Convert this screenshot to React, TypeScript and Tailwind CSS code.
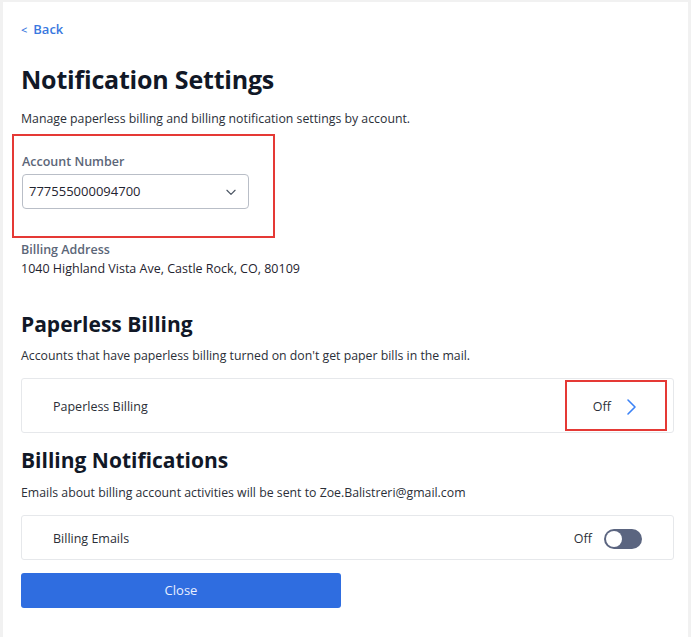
import React from "react";

const font = { fontFamily: '"Open Sans", "Noto Sans", sans-serif' };

const ChevronDown = () => (
	<svg width="14" height="14" viewBox="0 0 24 24" fill="none" stroke="#4b5563" strokeWidth="2" strokeLinecap="round" strokeLinejoin="round">
		<path d="M5 9l7 7 7-7" />
	</svg>
);

const ChevronRight = () => (
	<svg width="12" height="20" viewBox="0 0 12 20" fill="none" stroke="#3b82f6" strokeWidth="1.6" strokeLinecap="round" strokeLinejoin="round">
		<path d="M3 3l7 7-7 7" />
	</svg>
);

const App = () => {
	return (
		<div className="w-[691px] h-[637px] bg-[#f1f1f1] pt-[2px] px-[3px]" style={font}>
			<div className="h-full bg-white pl-[18px] pr-[15px] text-[#1f2430]">
				<div className="pt-[18px] flex items-center gap-[6px] text-[13px] text-[#3a78e0] font-semibold">
					<span className="text-[11px]">&lt;</span>
					<span>Back</span>
				</div>

				<h1 className="mt-[22px] text-[25px] leading-[34px] font-bold tracking-[-0.2px] text-[#111827]">
					Notification Settings
				</h1>
				<p className="mt-[15px] text-[12.3px] leading-[16px] text-[#2b2f38]">
					Manage paperless billing and billing notification settings by account.
				</p>

				<div className="mt-[7px] -ml-[9px] w-[263px] h-[104px] border-2 border-[#e53935] pl-[8px] pt-[17px]">
					<div className="text-[12.5px] font-semibold text-[#5b6678]">Account Number</div>
					<div className="mt-[3px] w-[227px] h-[35px] rounded-[4px] border border-[#b9bec7] flex items-center justify-between pl-[6px] pr-[10px] text-[13px] text-[#1f2430]">
						<span>777555000094700</span>
						<ChevronDown />
					</div>
				</div>

				<div className="mt-[3px] text-[12.5px] font-semibold text-[#5b6678]">Billing Address</div>
				<div className="mt-[1px] text-[12.5px] text-[#1f2430]">1040 Highland Vista Ave, Castle Rock, CO, 80109</div>

				<h2 className="mt-[31px] text-[21px] leading-[28px] font-bold text-[#111827]">Paperless Billing</h2>
				<p className="mt-[10px] text-[12.3px] leading-[16px] text-[#2b2f38]">
					Accounts that have paperless billing turned on don't get paper bills in the mail.
				</p>

				<div className="mt-[14px] w-[653px] h-[55px] border border-[#e6e8eb] rounded-[3px] flex items-center justify-between pl-[31px] pr-[6px]">
					<span className="pt-[3px] text-[12.5px] text-[#2b2f38]">Paperless Billing</span>
					<div className="w-[102px] h-[51px] border-2 border-[#e53935] flex items-center justify-end gap-[14px] pr-[28px] pt-[3px]">
						<span className="text-[12.5px] text-[#2b2f38]">Off</span>
						<ChevronRight />
					</div>
				</div>

				<h2 className="mt-[13px] text-[21px] leading-[28px] font-bold text-[#111827]">Billing Notifications</h2>
				<p className="mt-[11px] text-[12.3px] leading-[16px] text-[#2b2f38]">
					Emails about billing account activities will be sent to Zoe.Balistreri@gmail.com
				</p>

				<div className="mt-[14px] w-[653px] h-[45px] border border-[#e6e8eb] rounded-[3px] flex items-center justify-between pl-[31px] pr-[31px] pt-[3px]">
					<span className="text-[12.5px] text-[#2b2f38]">Billing Emails</span>
					<div className="flex items-center gap-[12px]">
						<span className="text-[12.5px] text-[#2b2f38]">Off</span>
						<div className="w-[38px] h-[20px] rounded-full bg-[#5b6580] p-[2px] flex items-center">
							<div className="w-[16px] h-[16px] rounded-full bg-white" />
						</div>
					</div>
				</div>

				<button className="mt-[13px] w-[320px] h-[35px] rounded-[3px] bg-[#2f6de0] text-[13px] text-[#e8efff] font-medium flex items-center justify-center">
					Close
				</button>
			</div>
		</div>
	);
};

export default App;
